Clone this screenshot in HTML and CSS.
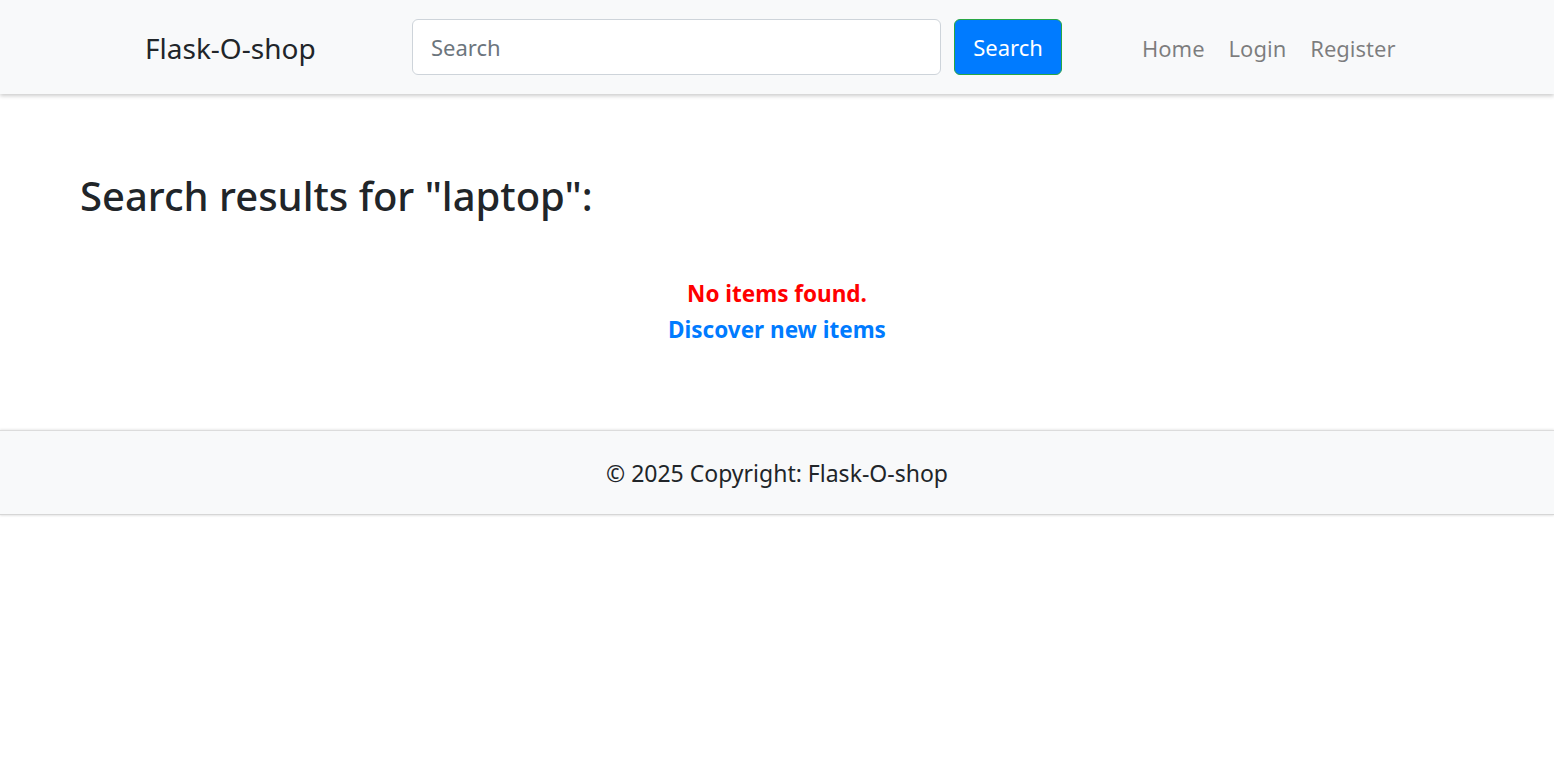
FILE: index.html
```html
<!DOCTYPE html>
<html lang="en">
<head>
<meta charset="utf-8">
<title>Flask-O-shop</title>
<link rel="stylesheet" href="styles.css">
</head>
<body>
<nav class="navbar">
  <a class="brand" href="#">Flask-O-shop</a>
  <form class="search-form">
    <input class="search-input" type="text" placeholder="Search">
    <button class="search-btn" type="button">Search</button>
  </form>
  <ul class="nav-links">
    <li><a href="#">Home</a></li>
    <li><a href="#">Login</a></li>
    <li><a href="#">Register</a></li>
  </ul>
</nav>
<main class="content">
  <h1 class="results-title">Search results for "laptop":</h1>
  <div class="empty">
    <p class="empty-msg">No items found.</p>
    <a class="discover" href="#">Discover new items</a>
  </div>
</main>
<footer class="footer">© 2025 Copyright: Flask-O-shop</footer>
<div class="page-rest"></div>
</body>
</html>
```

FILE: styles.css
```css
* { box-sizing: border-box; }
html, body { margin: 0; padding: 0; }
body {
  font-family: "Noto Sans", "Open Sans", sans-serif;
  color: #212529;
  background: #fff;
}
.navbar {
  height: 94px;
  background: #f8f9fa;
  box-shadow: 0 2px 4px rgba(0,0,0,0.2);
  display: flex;
  align-items: center;
  padding-left: 145px;
  padding-top: 2px;
  position: relative;
  z-index: 1;
}
.brand {
  width: 267px;
  font-size: 28px;
  color: #212529;
  text-decoration: none;
  line-height: 1;
}
.search-form {
  display: flex;
  gap: 13px;
  align-items: center;
  margin-top: -2px;
}
.search-input {
  width: 529px;
  height: 56px;
  border: 1px solid #ced4da;
  border-radius: 6px;
  padding: 0 18px;
  font-family: inherit;
  font-size: 22px;
  color: #495057;
  background: #fff;
  outline: none;
}
.search-input::placeholder { color: #6c757d; }
.search-btn {
  width: 108px;
  height: 56px;
  background: #007bff;
  border: 1px solid #28a745;
  border-radius: 6px;
  color: #fff;
  font-family: inherit;
  font-size: 22px;
  padding: 0;
}
.nav-links {
  list-style: none;
  margin: 0 0 0 68px;
  padding: 0;
  display: flex;
}
.nav-links a {
  display: block;
  padding: 0 12px;
  font-size: 22px;
  color: rgba(0,0,0,0.5);
  text-decoration: none;
}
.content {
  padding: 78px 80px 0;
  min-height: 336px;
}
.results-title {
  margin: 0;
  font-size: 40px;
  font-weight: 500;
  line-height: 1.2;
  color: #212529;
}
.empty {
  margin-top: 56px;
  text-align: center;
  font-weight: 700;
  font-size: 22.5px;
  line-height: 36px;
}
.empty-msg {
  margin: 0;
  color: #ff0000;
}
.discover {
  color: #007bff;
  text-decoration: none;
}
.footer {
  height: 85px;
  background: #f8f9fa;
  border-top: 1px solid #dcdcdc;
  border-bottom: 1px solid #d6d6d6;
  box-shadow: 0 -1px 2px rgba(0,0,0,0.08), 0 1px 2px rgba(0,0,0,0.1);
  display: flex;
  align-items: center;
  justify-content: center;
  font-size: 23px;
  color: #212529;
  position: relative;
}
.page-rest {
  height: 244px;
}
```
